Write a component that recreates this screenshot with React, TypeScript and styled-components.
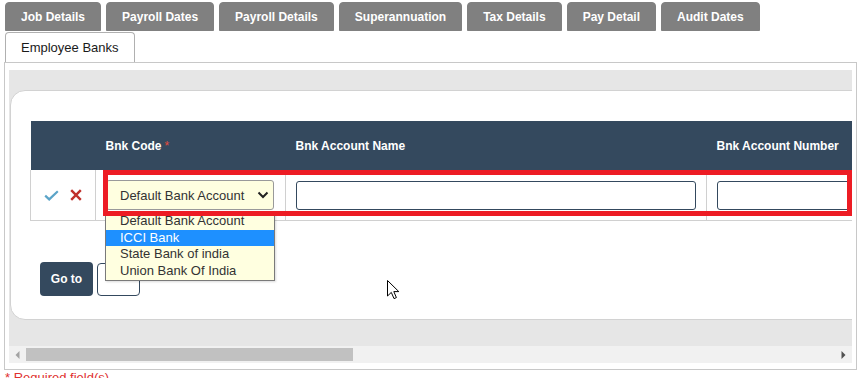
import React from "react";
import styled, { createGlobalStyle } from "styled-components";

const GlobalStyle = createGlobalStyle`
  html, body {
    margin: 0;
    padding: 0;
    background: #ffffff;
    overflow: hidden;
  }
  body {
    font-family: "Liberation Sans", Arial, sans-serif;
  }
  * { box-sizing: border-box; }
`;

const Page = styled.div`
  position: relative;
  width: 864px;
  height: 378px;
  padding: 2px 0 0 4px;
`;

const TabRow = styled.div<{ $top?: number }>`
  display: flex;
  gap: 5px;
  margin-left: 1px;
  margin-top: ${(p) => p.$top ?? 0}px;
`;

const Tab = styled.div`
  height: 29px;
  padding: 0 15px;
  display: flex;
  align-items: center;
  background: #808080;
  border: 1px solid #808080;
  border-radius: 4px 4px 0 0;
  color: #ffffff;
  font-weight: bold;
  font-size: 12px;
  white-space: nowrap;
`;

const ActiveTab = styled.div`
  height: 30px;
  padding: 0 15px;
  display: flex;
  align-items: center;
  background: #ffffff;
  border: 1px solid #b0b0b0;
  border-bottom: none;
  border-radius: 4px 4px 0 0;
  color: #1a1a1a;
  font-size: 13px;
  white-space: nowrap;
`;

const Panel = styled.div`
  width: 853px;
  height: 308px;
  border: 1px solid #c8c8c8;
  padding: 7px 4px 6px 4px;
`;

const GrayArea = styled.div`
  height: 293px;
  background: #e6e6e6;
  padding-top: 20px;
  overflow: hidden;
  display: flex;
  flex-direction: column;
`;

const CardStrip = styled.div`
  padding-left: 1px;
  height: 256px;
  flex-shrink: 0;
`;

const Card = styled.div`
  width: 2000px;
  height: 230px;
  background: #ffffff;
  border: 1px solid #d2d2d2;
  border-radius: 15px;
  padding: 30px 19px;
`;

const Table = styled.table`
  border-collapse: collapse;
  table-layout: fixed;
  width: 1026px;
`;

const Th = styled.th<{ $w: number }>`
  width: ${(p) => p.$w}px;
  height: 49px;
  background: #34495e;
  color: #ffffff;
  font-size: 12px;
  font-weight: bold;
  text-align: left;
  padding: 0 10px;
  white-space: nowrap;
`;

const Required = styled.span`
  color: #e74c3c;
  font-weight: normal;
  margin-left: 3px;
`;

const Td = styled.td`
  height: 50px;
  border: 1px solid #d0d0d0;
  border-top: none;
  padding: 0 10px;
  vertical-align: middle;
`;

const ActionCell = styled(Td)`
  padding: 0 0 0 13px;
`;

const Actions = styled.div`
  display: flex;
  align-items: center;
  gap: 11px;
  padding-top: 1px;
`;

const SelectWrap = styled.div`
  position: relative;
  width: 168px;
  height: 30px;
  margin-top: 1px;
`;

const FakeSelect = styled.div`
  width: 100%;
  height: 100%;
  background: #ffffe0;
  border: 1px solid #9a9a9a;
  border-radius: 3px;
  display: flex;
  align-items: center;
  justify-content: space-between;
  padding: 0 4px 0 13px;
  font-size: 13px;
  color: #333333;
`;

const Dropdown = styled.ul`
  position: absolute;
  top: 31px;
  left: -1px;
  width: 170px;
  margin: 0;
  padding: 1px 0;
  list-style: none;
  background: #ffffe0;
  border: 1px solid #7a7a7a;
  box-shadow: 1px 1px 2px rgba(0, 0, 0, 0.15);
  z-index: 5;
`;

const Option = styled.li<{ $active?: boolean }>`
  height: 16.5px;
  line-height: 16px;
  padding-left: 14px;
  font-size: 13px;
  color: ${(p) => (p.$active ? "#ffffff" : "#333333")};
  background: ${(p) => (p.$active ? "#1e90ff" : "transparent")};
  white-space: nowrap;
`;

const TextInput = styled.div<{ $w: number }>`
  width: ${(p) => p.$w}px;
  height: 29px;
  margin-top: 2px;
  border: 1px solid #34495e;
  border-radius: 3px;
  background: #ffffff;
`;

const ButtonRow = styled.div`
  display: flex;
  gap: 4px;
  margin: 41px 0 0 10px;
`;

const GoButton = styled.div`
  width: 53px;
  height: 34px;
  background: #34495e;
  border-radius: 4px;
  color: #ffffff;
  font-size: 12px;
  font-weight: bold;
  display: flex;
  align-items: center;
  justify-content: center;
`;

const GhostButton = styled.div`
  width: 43px;
  height: 33px;
  margin-top: 1px;
  border: 1px solid #34495e;
  border-radius: 4px;
  background: #ffffff;
`;

const Scrollbar = styled.div`
  height: 17px;
  background: #f1f1f1;
  display: flex;
  align-items: center;
  flex-shrink: 0;
`;

const ScrollArrow = styled.div`
  width: 17px;
  height: 17px;
  display: flex;
  align-items: center;
  justify-content: center;
`;

const ScrollTrack = styled.div`
  flex: 1;
  height: 17px;
  display: flex;
  align-items: center;
`;

const Thumb = styled.div`
  width: 327px;
  height: 13px;
  background: #c1c1c1;
`;

const RequiredNote = styled.div`
  margin-left: 1px;
  font-size: 13px;
  line-height: 15px;
  color: #e0312f;
`;

const Annotation = styled.div`
  position: absolute;
  left: 103px;
  top: 170px;
  width: 749px;
  height: 46px;
  border: 5px solid #ed1c24;
  pointer-events: none;
  z-index: 10;
`;

const Cursor = styled.svg`
  position: absolute;
  left: 387px;
  top: 280px;
  z-index: 11;
`;

const topTabs = [
  "Job Details",
  "Payroll Dates",
  "Payroll Details",
  "Superannuation",
  "Tax Details",
  "Pay Detail",
  "Audit Dates",
];

const banks = [
  "Default Bank Account",
  "ICCI Bank",
  "State Bank of india",
  "Union Bank Of India",
];

export default function App() {
  return (
    <>
      <GlobalStyle />
      <Page>
        <TabRow>
          {topTabs.map((t) => (
            <Tab key={t}>{t}</Tab>
          ))}
        </TabRow>
        <TabRow $top={1}>
          <ActiveTab>Employee Banks</ActiveTab>
        </TabRow>
        <Panel>
          <GrayArea>
            <CardStrip>
              <Card>
                <Table>
                  <thead>
                    <tr>
                      <Th $w={65}></Th>
                      <Th $w={190}>
                        Bnk Code<Required>*</Required>
                      </Th>
                      <Th $w={421}>Bnk Account Name</Th>
                      <Th $w={350}>Bnk Account Number</Th>
                    </tr>
                  </thead>
                  <tbody>
                    <tr>
                      <ActionCell>
                        <Actions>
                          <svg width="15" height="11" viewBox="0 0 15 11">
                            <path
                              d="M1.2 5.6 L5.2 9.4 L13.8 1.2"
                              fill="none"
                              stroke="#5ba4c8"
                              strokeWidth="2.2"
                            />
                          </svg>
                          <svg width="12" height="12" viewBox="0 0 12 12">
                            <path
                              d="M1.2 1.2 L10.8 10.8 M10.8 1.2 L1.2 10.8"
                              fill="none"
                              stroke="#c0302b"
                              strokeWidth="2.4"
                            />
                          </svg>
                        </Actions>
                      </ActionCell>
                      <Td>
                        <SelectWrap>
                          <FakeSelect>
                            <span>Default Bank Account</span>
                            <svg width="12" height="8" viewBox="0 0 12 8">
                              <path
                                d="M1.5 1.5 L6 6 L10.5 1.5"
                                fill="none"
                                stroke="#222222"
                                strokeWidth="2"
                              />
                            </svg>
                          </FakeSelect>
                          <Dropdown>
                            {banks.map((b, i) => (
                              <Option key={b} $active={i === 1}>
                                {b}
                              </Option>
                            ))}
                          </Dropdown>
                        </SelectWrap>
                      </Td>
                      <Td>
                        <TextInput $w={400} />
                      </Td>
                      <Td>
                        <TextInput $w={330} />
                      </Td>
                    </tr>
                  </tbody>
                </Table>
                <ButtonRow>
                  <GoButton>Go to</GoButton>
                  <GhostButton />
                </ButtonRow>
              </Card>
            </CardStrip>
            <Scrollbar>
              <ScrollArrow>
                <svg width="5" height="8" viewBox="0 0 5 8">
                  <path d="M4.5 0 L0.5 4 L4.5 8 Z" fill="#a3a3a3" />
                </svg>
              </ScrollArrow>
              <ScrollTrack>
                <Thumb />
              </ScrollTrack>
              <ScrollArrow>
                <svg width="5" height="8" viewBox="0 0 5 8">
                  <path d="M0.5 0 L4.5 4 L0.5 8 Z" fill="#505050" />
                </svg>
              </ScrollArrow>
            </Scrollbar>
          </GrayArea>
        </Panel>
        <RequiredNote>* Required field(s)</RequiredNote>
        <Annotation />
        <Cursor width="13" height="20" viewBox="0 0 13 20">
          <path
            d="M0.5 0.5 L0.5 16 L4.3 12.4 L7 18.6 L9.4 17.6 L6.8 11.6 L11.8 11.6 Z"
            fill="#ffffff"
            stroke="#000000"
            strokeWidth="1"
            strokeLinejoin="round"
          />
        </Cursor>
      </Page>
    </>
  );
}
